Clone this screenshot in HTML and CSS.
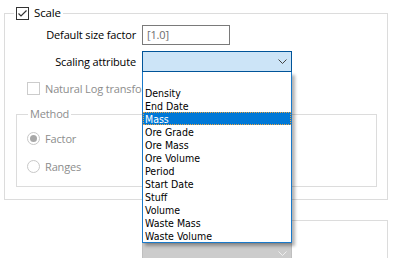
FILE: index.html
```html
<!DOCTYPE html>
<html lang="en">
<head>
    <meta charset="UTF-8">
    <title>Scale options</title>
    <link rel="stylesheet" href="styles.css">
</head>
<body>
    <div class="dialog">
        <fieldset class="group group-scale">
            <legend class="check-legend">
                <span class="checkbox">
                    <svg width="11" height="11" viewBox="0 0 11 11"><path d="M1.5 5.5 L4 8 L9.5 2.5" fill="none" stroke="#333" stroke-width="1.2"/></svg>
                </span>
                <span>Scale</span>
            </legend>

            <div class="form-grid">
                <label class="field-label">Default size factor</label>
                <div class="textbox">[1.0]</div>

                <label class="field-label">Scaling attribute</label>
                <div class="combo-wrap">
                    <div class="combo combo-open">
                        <svg class="chevron" width="9" height="5" viewBox="0 0 9 5"><polyline points="0.5,0.5 4.5,4.5 8.5,0.5" fill="none" stroke="#444" stroke-width="1"/></svg>
                    </div>
                    <ul class="dropdown">
                        <li>&nbsp;</li>
                        <li>Density</li>
                        <li>End Date</li>
                        <li class="selected">Mass</li>
                        <li>Ore Grade</li>
                        <li>Ore Mass</li>
                        <li>Ore Volume</li>
                        <li>Period</li>
                        <li>Start Date</li>
                        <li>Stuff</li>
                        <li>Volume</li>
                        <li>Waste Mass</li>
                        <li>Waste Volume</li>
                    </ul>
                </div>
            </div>

            <div class="option option-log disabled">
                <span class="checkbox"></span>
                <span>Natural Log transform</span>
            </div>

            <fieldset class="group group-method">
                <legend class="plain-legend">Method</legend>
                <div class="option option-radio disabled">
                    <span class="radio checked"></span>
                    <span>Factor</span>
                </div>
                <div class="option option-radio disabled">
                    <span class="radio"></span>
                    <span>Ranges</span>
                </div>
            </fieldset>
        </fieldset>

        <div class="lower">
            <div class="combo combo-disabled">
                <svg class="chevron" width="9" height="5" viewBox="0 0 9 5"><polyline points="0.5,0.5 4.5,4.5 8.5,0.5" fill="none" stroke="#eee" stroke-width="1"/></svg>
            </div>
        </div>
    </div>
</body>
</html>
```

FILE: styles.css
```css
* {
    margin: 0;
    padding: 0;
    box-sizing: border-box;
}

body {
    margin: 0;
    background: #fff;
    color: #000;
    font-family: "Open Sans", "Noto Sans", sans-serif;
    font-size: 11px;
    letter-spacing: -0.15px;
    line-height: 16px;
    overflow: hidden;
}

.dialog {
    width: 393px;
    height: 258px;
}

/* group boxes */
.group {
    border: 1px solid #dcdcdc;
    min-inline-size: 0;
}

.group-scale {
    margin: 5px 0 0 4px;
    width: 384px;
    height: 195px;
    padding: 0;
}

.check-legend {
    display: flex;
    align-items: center;
    gap: 5px;
    height: 16px;
    margin-left: 9px;
    padding: 0 2px;
    font-size: 11.5px;
}

.plain-legend {
    margin-left: 11px;
    padding: 0 2px;
    height: 14px;
    line-height: 14px;
    color: #8d8d8d;
}

.group-method {
    margin: 12px 0 0 11px;
    width: 361px;
    height: 80px;
    padding: 0;
}

/* checkbox / radio */
.checkbox {
    width: 13px;
    height: 13px;
    border: 1px solid #333;
    background: #fff;
    display: inline-flex;
    align-items: center;
    justify-content: center;
    flex: none;
}

.disabled .checkbox {
    border-color: #cccccc;
}

.radio {
    width: 13px;
    height: 13px;
    border: 1px solid #c8c8c8;
    border-radius: 50%;
    background: #fff;
    display: inline-flex;
    align-items: center;
    justify-content: center;
    flex: none;
}

.radio.checked::after {
    content: "";
    width: 7px;
    height: 7px;
    border-radius: 50%;
    background: #a8a8a8;
}

.option {
    display: flex;
    align-items: center;
    gap: 5px;
    height: 13px;
    white-space: nowrap;
}

.disabled {
    color: #8d8d8d;
}

.option-log {
    margin: 10px 0 0 22px;
}

.option-radio {
    margin-left: 10px;
    margin-top: 11px;
}

.option-radio + .option-radio {
    margin-top: 15px;
}

/* form rows */
.form-grid {
    display: grid;
    grid-template-columns: 131px auto;
    column-gap: 6px;
    row-gap: 6px;
    align-items: center;
    margin-top: 4px;
}

.field-label {
    text-align: right;
}

.textbox {
    width: 88px;
    height: 20px;
    border: 1px solid #7a7a7a;
    color: #6d6d6d;
    padding-left: 4px;
    line-height: 18px;
}

.combo-wrap {
    position: relative;
    width: 150px;
}

.combo {
    width: 150px;
    height: 21px;
    display: flex;
    align-items: center;
    justify-content: flex-end;
    padding-right: 4px;
}

.combo-open {
    background: #cce4f7;
    border: 1px solid #005499;
}

.combo-disabled {
    background: #cccccc;
    border: 1px solid #bfbfbf;
}

/* open drop-down list */
.dropdown {
    position: absolute;
    top: 100%;
    left: 0;
    width: 150px;
    list-style: none;
    background: #fff;
    border: 1px solid #1979ca;
    border-top: none;
    padding-top: 1px;
    box-shadow: 3px 3px 3px rgba(0, 0, 0, 0.3);
    font-family: "DejaVu Sans Condensed", "DejaVu Sans", sans-serif;
    font-size: 10.5px;
    letter-spacing: 0;
    line-height: 15px;
    z-index: 10;
}

.dropdown li {
    height: 13px;
    padding-left: 2px;
    white-space: nowrap;
}

.dropdown li.selected {
    background: #0078d7;
    color: #fff;
    outline: 1px dotted #e9a544;
    outline-offset: -1px;
}

/* lower section */
.lower {
    margin: 20px 0 0 142px;
    width: 246px;
    height: 38px;
    border: 1px solid #dcdcdc;
    border-bottom: none;
    padding-top: 22px;
}

.lower .combo {
    margin-left: -1px;
}
```
